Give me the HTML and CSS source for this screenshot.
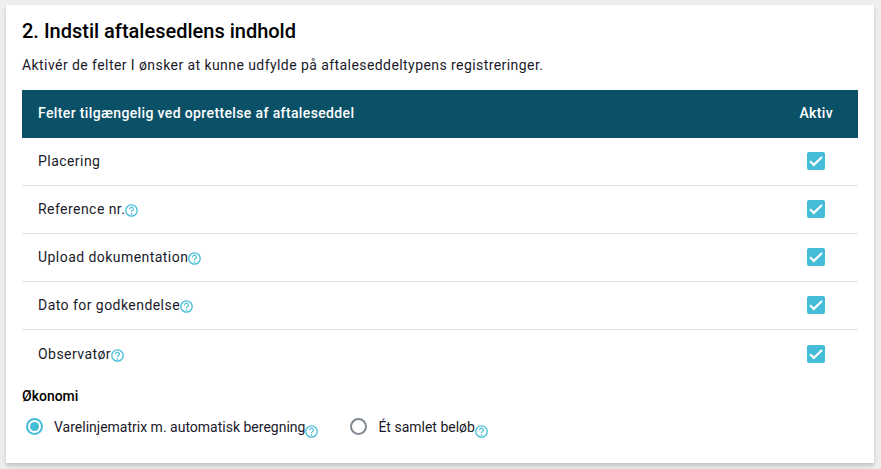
FILE: index.html
```html
<!DOCTYPE html>
<html lang="da">

<head>
    <meta charset="UTF-8" />
    <title>Aftaleseddel</title>
    <link rel="stylesheet" href="styles.css">
</head>

<body>
    <svg class="icon-defs" width="0" height="0">
        <symbol id="help" viewBox="0 0 13 13">
            <circle cx="6.5" cy="6.5" r="5.7" fill="none" stroke="#45bcd8" stroke-width="1.3" />
            <path d="M4.6 5.2a1.9 1.9 0 1 1 2.8 1.6c-.6.3-.9.6-.9 1.3" fill="none" stroke="#45bcd8" stroke-width="1.2" />
            <circle cx="6.5" cy="9.9" r=".8" fill="#45bcd8" />
        </symbol>
        <symbol id="check" viewBox="0 0 18 18">
            <rect width="18" height="18" rx="2" fill="#45bcd8" />
            <path d="M3 9.3l3.9 3.6L15 5" fill="none" stroke="#fff" stroke-width="2.2" />
        </symbol>
    </svg>

    <div class="card">
        <h2 class="title">2. Indstil aftalesedlens indhold</h2>
        <p class="intro">Aktivér de felter I ønsker at kunne udfylde på aftaleseddeltypens registreringer.</p>

        <div class="table-head">
            <span>Felter tilgængelig ved oprettelse af aftaleseddel</span>
            <span class="col-active">Aktiv</span>
        </div>

        <div class="row">
            <span>Placering</span>
            <span class="col-active"><svg class="checkbox"><use href="#check" /></svg></span>
        </div>
        <div class="row">
            <span class="label">Reference nr.<svg class="help"><use href="#help" /></svg></span>
            <span class="col-active"><svg class="checkbox"><use href="#check" /></svg></span>
        </div>
        <div class="row">
            <span class="label">Upload dokumentation<svg class="help"><use href="#help" /></svg></span>
            <span class="col-active"><svg class="checkbox"><use href="#check" /></svg></span>
        </div>
        <div class="row">
            <span class="label">Dato for godkendelse<svg class="help"><use href="#help" /></svg></span>
            <span class="col-active"><svg class="checkbox"><use href="#check" /></svg></span>
        </div>
        <div class="row row-last">
            <span class="label">Observatør<svg class="help"><use href="#help" /></svg></span>
            <span class="col-active"><svg class="checkbox"><use href="#check" /></svg></span>
        </div>

        <div class="economy-title">Økonomi</div>
        <div class="radio-group">
            <div class="radio-item">
                <span class="radio radio-on"></span>
                <span class="label">Varelinjematrix m. automatisk beregning<svg class="help help-low"><use href="#help" /></svg></span>
            </div>
            <div class="radio-item">
                <span class="radio"></span>
                <span class="label">Ét samlet beløb<svg class="help help-low"><use href="#help" /></svg></span>
            </div>
        </div>
    </div>
</body>

</html>
```

FILE: styles.css
```css
* {
    margin: 0;
    padding: 0;
    box-sizing: border-box;
}

html,
body {
    height: 100%;
    overflow: hidden;
}

body {
    font-family: 'Roboto', sans-serif;
    background: #eeeeee;
    color: #1a1a2a;
    font-size: 14px;
    letter-spacing: 0.45px;
    padding: 5px 7px 0 6px;
}

.icon-defs {
    display: block;
}

.card {
    background: #ffffff;
    height: 458px;
    padding: 13px 16px 0 16px;
    box-shadow: 0 3px 4px rgba(0, 0, 0, 0.18);
}

.title {
    font-size: 20px;
    font-weight: 500;
    line-height: 26px;
    letter-spacing: 0;
    color: #000000;
}

.intro {
    line-height: 20px;
    margin-top: 11px;
    letter-spacing: 0.43px;
}

.table-head {
    display: flex;
    align-items: center;
    justify-content: space-between;
    height: 48px;
    margin-top: 15px;
    padding: 0 25px 2px 16px;
    background: #0a5167;
    color: #ffffff;
    font-weight: 500;
    letter-spacing: 0.37px;
}

.row {
    display: flex;
    align-items: center;
    justify-content: space-between;
    height: 48px;
    padding: 0 33px 1px 16px;
    border-bottom: 1px solid #e0e0e0;
}

.row-last {
    border-bottom: 0;
}

.col-active {
    display: flex;
}

.label {
    display: flex;
    align-items: center;
}

.checkbox {
    width: 18px;
    height: 18px;
}

.help {
    width: 13px;
    height: 13px;
    margin-top: 3px;
}

.help-low {
    margin-top: 10px;
}

.economy-title {
    font-weight: 500;
    line-height: 20px;
    letter-spacing: 0;
    color: #000000;
    margin-top: 8px;
}

.radio-group {
    display: flex;
    gap: 32px;
    margin-top: 9px;
    padding-left: 4px;
    letter-spacing: 0;
}

.radio-item {
    display: flex;
    align-items: center;
    gap: 11px;
}

.radio {
    width: 17px;
    height: 17px;
    border: 2px solid #808890;
    border-radius: 50%;
    position: relative;
}

.radio-on {
    border-color: #45bcd8;
}

.radio-on::after {
    content: '';
    position: absolute;
    top: 2px;
    left: 2px;
    width: 9px;
    height: 9px;
    border-radius: 50%;
    background: #45bcd8;
}
```
